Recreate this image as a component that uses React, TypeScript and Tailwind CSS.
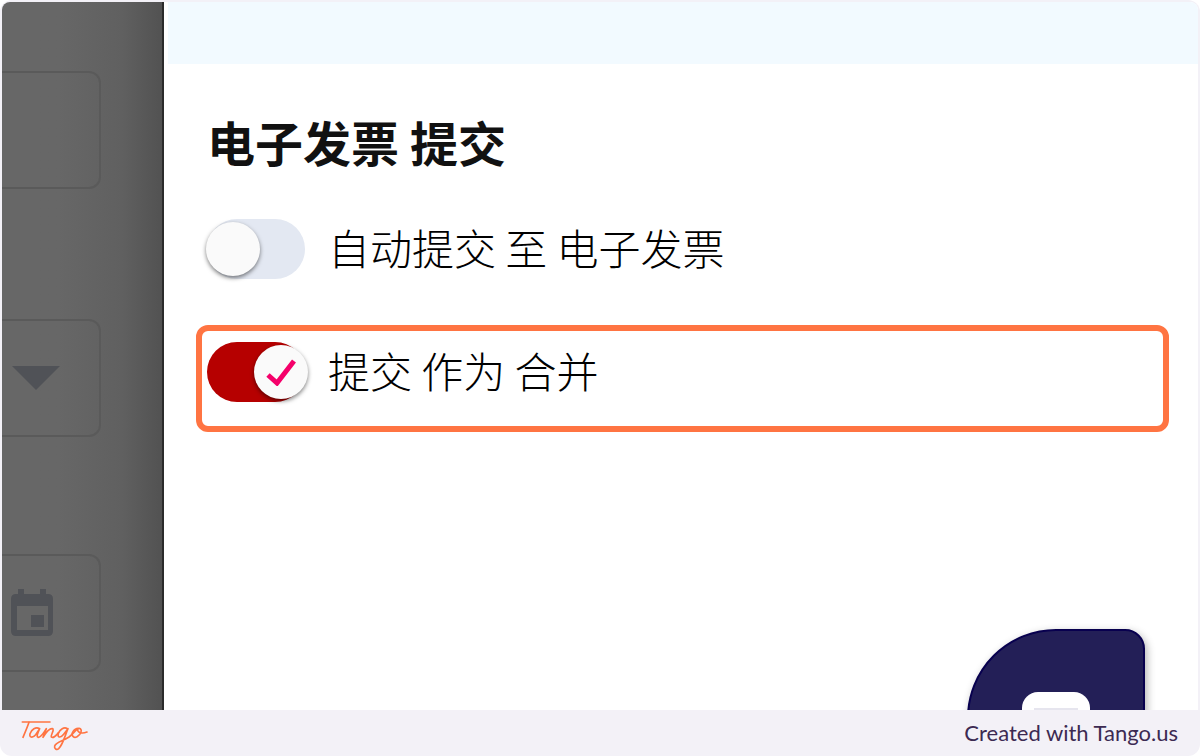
import React, { useState } from 'react';

interface ToggleRowProps {
  id: string;
  label: string;
  checked: boolean;
  highlighted?: boolean;
  onChange: (checked: boolean) => void;
}

const ToggleRow: React.FC<ToggleRowProps> = ({ id, label, checked, highlighted, onChange }) => (
  <div
    className={`flex h-[107px] items-start rounded-xl border-[6px] pl-[5px] pt-[11px] ${
      highlighted ? 'border-[#ff7442]' : 'border-transparent'
    }`}
  >
    <label htmlFor={id} className="flex cursor-pointer items-start gap-[23px]">
      <input
        id={id}
        type="checkbox"
        role="switch"
        className="sr-only"
        checked={checked}
        onChange={(e) => onChange(e.target.checked)}
      />
      <span
        className={`flex h-[60px] w-[98px] items-center rounded-full ${
          checked ? 'justify-end bg-[#b60000]' : 'bg-[#e3e8f2]'
        }`}
      >
        <span
          className={`flex size-[54px] items-center justify-center rounded-full bg-[#fafafa] shadow-[0_2px_4px_rgba(0,0,0,0.5)] ${
            checked ? '-mr-[3px]' : '-ml-px'
          }`}
        >
          {checked && (
            <svg viewBox="0 0 30 28" className="h-7 w-[30px]" fill="none" stroke="#f5006a" strokeWidth="5">
              <path d="M2 17 L11 25 L28 3" />
            </svg>
          )}
        </span>
      </span>
      <span className="text-[42px] font-light leading-[56px] text-black">{label}</span>
    </label>
  </div>
);

const Backdrop: React.FC = () => (
  <aside className="w-[162px] shrink-0 border-r-2 border-[#2b2b2b] bg-linear-to-r from-[#676767] from-35% via-[#606060] via-75% to-[#525252] pt-[69px]">
    <div className="h-[118px] w-[99px] rounded-r-xl border-2 border-l-0 border-[#5a5a5a]" />
    <div className="mt-[130px] flex h-[118px] w-[99px] items-center rounded-r-xl border-2 border-l-0 border-[#5a5a5a] pl-[10px]">
      <svg viewBox="0 0 48 24" className="h-6 w-12" fill="#505257">
        <path d="M0 0 H48 L24 24 Z" />
      </svg>
    </div>
    <div className="mt-[117px] flex h-[118px] w-[99px] items-center rounded-r-xl border-2 border-l-0 border-[#5a5a5a] pl-[9px]">
      <svg viewBox="0 0 42 48" className="h-12 w-[42px]" fill="#505257">
        <path
          fillRule="evenodd"
          d="M7 0 H13 V5 H29 V0 H35 V5 H37 Q42 5 42 10 V42 Q42 47 37 47 H5 Q0 47 0 42 V10 Q0 5 5 5 H7 Z M6 17 V41 H37 V17 Z"
        />
        <path d="M20 26 H33 V38 H20 Z" />
      </svg>
    </div>
  </aside>
);

const TangoLogo: React.FC = () => (
  <svg
    viewBox="60 26 210 108"
    className="h-9 w-[70px]"
    fill="none"
    stroke="#ff7442"
    strokeWidth="5"
    strokeLinecap="round"
    strokeLinejoin="round"
    role="img"
    aria-label="Tango"
  >
    <path d="M67 47 H150" />
    <path d="M87 48 C82 63 75 79 69 93" />
    <path d="M118 67 C108 60 94 70 90 82 C87 93 97 97 107 85 L119 67 C112 82 109 91 114 93 C121 95 130 82 139 67 L129 93 C137 80 148 66 157 67 C165 69 151 87 154 92 C159 97 169 87 175 79" />
    <path d="M202 67 C192 61 180 69 175 81 C171 93 181 97 191 84 L204 67 C195 88 188 116 176 127 C170 132 162 127 164 119 C168 108 190 104 207 92 C216 85 223 76 231 69" />
    <path d="M235 66 C221 67 213 82 218 89 C224 98 239 89 243 78 C246 68 239 64 234 67 C229 74 240 85 261 77" />
  </svg>
);

const App: React.FC = () => {
  const [autoSubmit, setAutoSubmit] = useState(false);
  const [consolidated, setConsolidated] = useState(true);

  return (
    <div className="flex min-h-screen flex-col overflow-hidden rounded-xl bg-[#f3f1f7] px-0.5 pt-0.5 font-['Noto_Sans_CJK_SC',sans-serif]">
      <div className="relative flex flex-1 overflow-hidden rounded-t-lg bg-white">
        <Backdrop />

        <main className="min-w-0 flex-1">
          <div className="ml-1 h-[62px] bg-[#f2faff]" />
          <div className="pl-8 pr-[29px] pt-[42px]">
            <h1 className="pl-[11px] text-[48px] font-bold leading-[70px] text-[#111]">电子发票 提交</h1>
            <div className="mt-[26px] flex flex-col gap-4">
              <ToggleRow id="auto-submit" label="自动提交 至 电子发票" checked={autoSubmit} onChange={setAutoSubmit} />
              <ToggleRow
                id="consolidated"
                label="提交 作为 合并"
                checked={consolidated}
                highlighted
                onChange={setConsolidated}
              />
            </div>
          </div>
        </main>

        {/* Chat launcher, cut off by the bottom edge */}
        <button
          type="button"
          aria-label="Chat"
          className="absolute -bottom-[97px] right-[53px] flex h-[178px] w-[178px] justify-center rounded-[90px] rounded-tr-[20px] border-2 border-[#08004f] bg-[#231f57] pt-[61px] shadow-[2px_3px_8px_rgba(0,0,0,0.3)]"
        >
          <span className="flex h-16 w-[68px] justify-center rounded-2xl bg-white pt-4">
            <span className="h-1 w-11 bg-[#e6e5ee]" />
          </span>
        </button>
      </div>

      <footer className="flex h-[46px] shrink-0 items-center justify-between pl-[18px] pr-5">
        <TangoLogo />
        <span className="font-['Lato',sans-serif] text-[22px] leading-7 text-[#3c2a52]">Created with Tango.us</span>
      </footer>
    </div>
  );
};

export default App;
